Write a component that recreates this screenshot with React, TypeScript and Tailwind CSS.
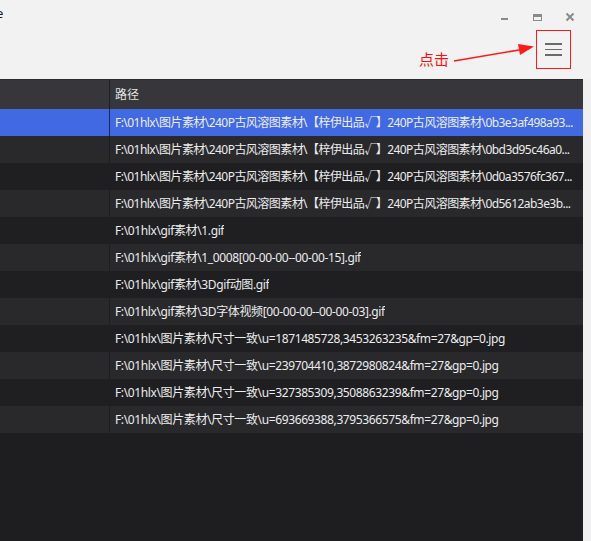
import React from "react";

const prefix240 = "F:\\01hlx\\图片素材\\240P古风溶图素材\\【梓伊出品√】240P古风溶图素材\\";
const rows: string[] = [
  prefix240 + "0b3e3af498a93...",
  prefix240 + "0bd3d95c46a0...",
  prefix240 + "0d0a3576fc367...",
  prefix240 + "0d5612ab3e3b...",
  "F:\\01hlx\\gif素材\\1.gif",
  "F:\\01hlx\\gif素材\\1_0008[00-00-00--00-00-15].gif",
  "F:\\01hlx\\gif素材\\3Dgif动图.gif",
  "F:\\01hlx\\gif素材\\3D字体视频[00-00-00--00-00-03].gif",
  "F:\\01hlx\\图片素材\\尺寸一致\\u=1871485728,3453263235&fm=27&gp=0.jpg",
  "F:\\01hlx\\图片素材\\尺寸一致\\u=239704410,3872980824&fm=27&gp=0.jpg",
  "F:\\01hlx\\图片素材\\尺寸一致\\u=327385309,3508863239&fm=27&gp=0.jpg",
  "F:\\01hlx\\图片素材\\尺寸一致\\u=693669388,3795366575&fm=27&gp=0.jpg",
];

export default function App() {
  return (
    <div
      className="w-[591px] h-[541px] bg-[#f2f2f2] flex flex-col overflow-hidden relative"
      style={{ fontFamily: '"Noto Sans", "Noto Sans CJK SC", sans-serif' }}
    >
      {/* Title / toolbar area */}
      <div className="h-[79px] relative shrink-0">
        <div className="absolute left-[-4px] top-[7px] text-[13px] text-[#1a1a2a] leading-none">e</div>
        {/* minimize */}
        <div className="absolute left-[501px] top-[18px] w-[7px] h-[2px] bg-[#8a8a8a]" />
        {/* maximize */}
        <div className="absolute left-[533px] top-[14px] w-[9px] h-[7px] border border-[#8a8a8a] border-t-[3px]" />
        {/* close */}
        <svg className="absolute left-[565px] top-[12px]" width="10" height="10" viewBox="0 0 10 10">
          <path d="M1.5 1.5 L8.5 8.5 M8.5 1.5 L1.5 8.5" stroke="#8a8a8a" strokeWidth="2" />
        </svg>
        {/* menu button with red highlight */}
        <div className="absolute left-[536px] top-[30px] w-[35px] h-[39px] border-[1.5px] border-[#ff1a1a] flex flex-col items-center justify-center gap-[4px]">
          <div className="w-[17px] h-[1.5px] bg-[#6a6a6a]" />
          <div className="w-[17px] h-[1.5px] bg-[#6a6a6a]" />
          <div className="w-[17px] h-[1.5px] bg-[#6a6a6a]" />
        </div>
        {/* annotation */}
        <div
          className="absolute left-[419px] top-[51px] text-[15px] leading-none text-[#ff1010]"
          style={{ fontFamily: '"Noto Sans CJK SC", sans-serif' }}
        >
          点击
        </div>
        <svg className="absolute left-0 top-0" width="591" height="79" viewBox="0 0 591 79">
          <line x1="454" y1="61" x2="522" y2="49.5" stroke="#ff1a1a" strokeWidth="1.5" />
          <polygon points="534,46.5 518,44 520,55" fill="#ff1a1a" />
        </svg>
      </div>

      {/* Table */}
      <div className="flex-1 flex">
        <div
          className="w-[583px] bg-[#1e1e21] flex flex-col text-[12px] text-[#ececec]"
          style={{ fontFamily: '"Noto Sans", "Noto Sans CJK SC", sans-serif' }}
        >
          <div className="h-[30px] flex bg-[#37373b] border-t border-[#2a2a2a]">
            <div className="w-[110px] border-r border-[#202022]" />
            <div className="flex-1 pl-[5px] flex items-center text-[#e4e4e4]">路径</div>
          </div>
          {rows.map((r, i) => {
            const bg = i === 0 ? "bg-[#4169e1]" : i % 2 === 1 ? "bg-[#29292c]" : "bg-[#1f1f22]";
            const divider = i === 0 ? "border-[#1d2a55]" : i % 2 === 1 ? "border-[#1e1e20]" : "border-[#1f1f22]";
            const track = i < 4 ? "tracking-[-0.55px]" : "tracking-[-0.38px]";
            return (
              <div key={i} className={`h-[27px] flex ${bg}`}>
                <div className={`w-[110px] border-r ${divider}`} />
                <div className="flex-1 min-w-0 pl-[5px] pr-[4px] flex items-center">
                  <span className={`block whitespace-nowrap overflow-hidden text-ellipsis ${track}`}>{r}</span>
                </div>
              </div>
            );
          })}
        </div>
        <div className="flex-1 bg-[#f0f0f0]" />
      </div>
    </div>
  );
}
